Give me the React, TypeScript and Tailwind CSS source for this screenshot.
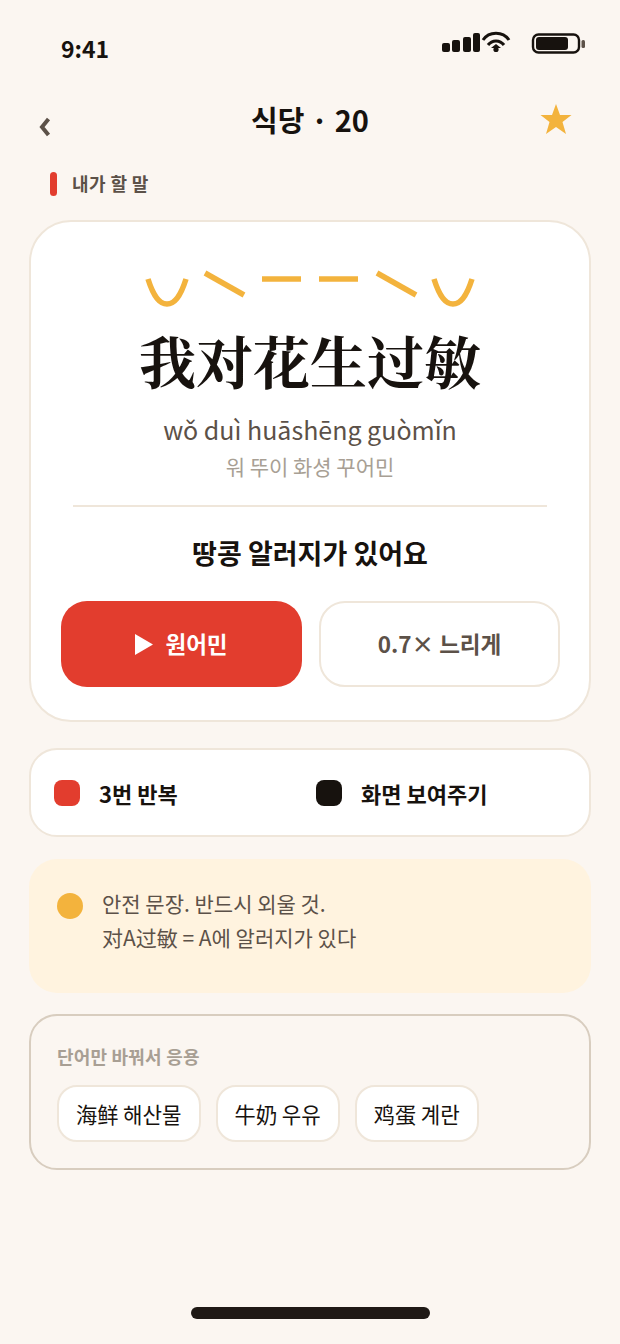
import React from 'react';

const KR = { fontFamily: '"Noto Sans CJK KR", "Noto Sans CJK SC", sans-serif' };

const StatusIcons: React.FC = () => (
  <svg width="144" height="24" viewBox="0 0 144 24" className="block">
    <rect x="0" y="12" width="8" height="9" rx="2" fill="#17120e" />
    <rect x="10" y="9" width="8" height="12" rx="2" fill="#17120e" />
    <rect x="21" y="6" width="8" height="15" rx="2" fill="#17120e" />
    <rect x="31" y="2" width="7" height="19" rx="2" fill="#17120e" />
    <path d="M41 9 C47 0 61 0 67 9" fill="none" stroke="#17120e" strokeWidth="3" />
    <path d="M46 14 C50 8.5 58 8.5 62 14" fill="none" stroke="#17120e" strokeWidth="3" />
    <path d="M49 17 L54 13 L59 17 Z" fill="#17120e" />
    <circle cx="54" cy="18.5" r="2.6" fill="#17120e" />
    <rect x="91" y="3.5" width="46" height="18" rx="5.5" fill="none" stroke="#17120e" strokeWidth="2.4" />
    <rect x="94" y="6" width="32" height="13" rx="3" fill="#17120e" />
    <rect x="139.5" y="9" width="3.5" height="8" rx="1.5" fill="#5c5148" />
  </svg>
);

const ToneMarks: React.FC = () => (
  <svg width="340" height="42" viewBox="0 0 340 42" className="block">
    <g fill="none" stroke="#f3b33d" strokeWidth="5.5">
      <path d="M8 9 C14 28 20 34 27 34 C34 34 40 28 46 9" />
      <path d="M65 3 L104 25" />
      <path d="M122 9 L161 9" />
      <path d="M179 9 L218 9" />
      <path d="M237 3 L276 25" />
      <path d="M294 9 C300 28 306 34 313 34 C320 34 326 28 332 9" />
    </g>
  </svg>
);

const Chip: React.FC<{ label: string }> = ({ label }) => (
  <div className="h-[57px] px-[17px] flex items-center rounded-[20px] bg-white border-2 border-[#efe6da] text-[21.2px] text-[#17120e]">
    {label}
  </div>
);

const App: React.FC = () => {
  return (
    <div className="w-[620px] h-[1344px] bg-[#fbf6f1] flex flex-col overflow-hidden" style={KR}>
      <div className="h-[72px] pl-[61px] pr-[34px] flex justify-between">
        <span className="mt-[30px] text-[23px] leading-[36px] font-bold text-[#17120e]">9:41</span>
        <div className="mt-[31px]">
          <StatusIcons />
        </div>
      </div>

      <div className="relative h-[82px] flex items-center justify-center">
        <svg width="12" height="20" viewBox="0 0 12 20" className="absolute left-[39px] top-[45px]">
          <path d="M9.5 2 L3 10 L9.5 18" fill="none" stroke="#5c5148" strokeWidth="4" />
        </svg>
        <h1 className="text-[29px] leading-[40px] font-bold text-[#17120e] mt-[12px]">식당 · 20</h1>
        <svg width="32" height="30" viewBox="0 0 32 30" className="absolute right-[48px] top-[32px]">
          <path d="M16 0 L20 11 L31.5 11 L22.5 18 L26 30 L16 23 L6 30 L9.5 18 L0.5 11 L12 11 Z" fill="#f3b33d" />
        </svg>
      </div>

      <div className="h-[66px] pl-[50px] pb-[6px] flex items-center gap-[15px]">
        <div className="w-[7px] h-[24px] rounded-full bg-[#e23d2e]" />
        <span className="text-[18px] tracking-[0.4px] leading-[28px] font-bold text-[#5c5148] mt-[-2px]">내가 할 말</span>
      </div>

      <div className="mx-[29px] h-[502px] bg-white border-2 border-[#efe6da] rounded-[42px] px-[30px] flex flex-col items-center">
        <div className="mt-[48px]">
          <ToneMarks />
        </div>
        <div
          className="mt-[11px] text-[57px] leading-[72px] font-bold text-[#17120e] whitespace-nowrap"
          style={{ fontFamily: '"Noto Serif CJK SC", "Noto Serif CJK", serif' }}
        >
          我对花生过敏
        </div>
        <div className="mt-[14px] text-[25px] leading-[40px] text-[#5c5148]">wǒ duì huāshēng guòmǐn</div>
        <div className="mt-[1px] text-[21px] leading-[32px] text-[#a89f94]">워 뚜이 화셩 꾸어민</div>
        <div className="mt-[23px] w-[474px] h-[2px] bg-[#efe6da]" />
        <div className="mt-[26px] text-[27px] leading-[40px] font-bold text-[#17120e]">땅콩 알러지가 있어요</div>
        <div className="mt-[28px] w-[499px] self-start flex gap-[17px]">
          <div className="w-[241px] h-[86px] rounded-[26px] bg-[#e23d2e] flex items-center justify-center gap-[12px] text-white text-[22.5px] font-bold">
            <svg width="18" height="21" viewBox="0 0 18 21">
              <path d="M0 0 L18 10.5 L0 21 Z" fill="#ffffff" />
            </svg>
            원어민
          </div>
          <div className="w-[241px] h-[86px] rounded-[26px] bg-white border-2 border-[#efe6da] flex items-center justify-center text-[#5c5148] text-[22.5px] font-bold">
            0.7× 느리게
          </div>
        </div>
      </div>

      <div className="mx-[29px] mt-[26px] h-[89px] bg-white border-2 border-[#efe6da] rounded-[28px] pl-[23px] flex items-center">
        <div className="w-[262px] flex items-center gap-[19px]">
          <div className="w-[26px] h-[26px] rounded-[8px] bg-[#e23d2e]" />
          <span className="text-[22px] leading-[32px] font-bold text-[#17120e] mt-[1px]">3번 반복</span>
        </div>
        <div className="flex items-center gap-[19px]">
          <div className="w-[26px] h-[26px] rounded-[8px] bg-[#17120e]" />
          <span className="text-[22px] leading-[32px] font-bold text-[#17120e] mt-[1px]">화면 보여주기</span>
        </div>
      </div>

      <div className="mx-[29px] mt-[22px] h-[134px] bg-[#fff3df] rounded-[28px] pl-[28px] pt-[27px] flex gap-[19px]">
        <div className="w-[26px] h-[26px] rounded-full bg-[#f3b33d] mt-[7px]" />
        <div className="text-[21px] leading-[34px] text-[#5c5148]">
          <div>안전 문장. 반드시 외울 것.</div>
          <div>对A过敏 = A에 알러지가 있다</div>
        </div>
      </div>

      <div className="mx-[29px] mt-[21px] h-[156px] border-2 border-[#d8cdbf] rounded-[28px] pl-[26px] pt-[26px]">
        <div className="text-[18px] tracking-[0.2px] leading-[28px] font-bold text-[#a89f94]">단어만 바꿔서 응용</div>
        <div className="mt-[15px] flex gap-[15px]">
          <Chip label="海鲜 해산물" />
          <Chip label="牛奶 우유" />
          <Chip label="鸡蛋 계란" />
        </div>
      </div>

      <div className="mt-[137px] mx-auto w-[239px] h-[12px] rounded-full bg-[#1f1915]" />
    </div>
  );
};

export default App;
